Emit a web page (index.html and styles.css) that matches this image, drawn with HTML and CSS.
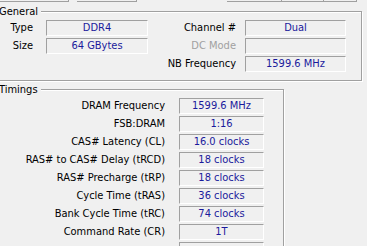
FILE: index.html
```html
<!DOCTYPE html>
<html>
<head>
<meta charset="utf-8">
<link rel="stylesheet" href="styles.css">
</head>
<body>
<div class="panel">
  <div class="topstrip">
    <span class="cell c1"></span><span class="cell c2"></span><span class="gap1"></span><span class="cell c3"></span><span class="cell c4"></span><span class="cell c5"></span>
  </div>

  <div class="group general">
    <div class="title">General</div>
    <div class="grid-gen">
      <div class="lbl l1">Type</div>
      <div class="field f1">DDR4</div>
      <div class="lbl l2">Channel #</div>
      <div class="field f2">Dual</div>

      <div class="lbl l1">Size</div>
      <div class="field f1">64 GBytes</div>
      <div class="lbl l2 disabled">DC Mode</div>
      <div class="field f2"></div>

      <div class="lbl l1"></div>
      <div class="empty"></div>
      <div class="lbl l2">NB Frequency</div>
      <div class="field f2">1599.6 MHz</div>
    </div>
  </div>

  <div class="group timings">
    <div class="title">Timings</div>
    <div class="grid-tim">
      <div class="lbl lt">DRAM Frequency</div><div class="field ft">1599.6 MHz</div>
      <div class="lbl lt">FSB:DRAM</div><div class="field ft">1:16</div>
      <div class="lbl lt">CAS# Latency (CL)</div><div class="field ft">16.0 clocks</div>
      <div class="lbl lt">RAS# to CAS# Delay (tRCD)</div><div class="field ft">18 clocks</div>
      <div class="lbl lt">RAS# Precharge (tRP)</div><div class="field ft">18 clocks</div>
      <div class="lbl lt">Cycle Time (tRAS)</div><div class="field ft">36 clocks</div>
      <div class="lbl lt">Bank Cycle Time (tRC)</div><div class="field ft">74 clocks</div>
      <div class="lbl lt">Command Rate (CR)</div><div class="field ft">1T</div>
      <div class="lbl lt"></div><div class="field ft"></div>
    </div>
  </div>
</div>
</body>
</html>
```

FILE: styles.css
```css
html, body {
  margin: 0;
  padding: 0;
  background: #f0f0f0;
  overflow: hidden;
}
body {
  width: 367px;
  height: 246px;
  font-family: "DejaVu Sans Condensed", "DejaVu Sans", "Liberation Sans", sans-serif;
  font-size: 11px;
  color: #000;
}
.panel {
  margin-left: -6px;
  width: 373px;
}
.topstrip {
  display: flex;
  height: 2px;
  padding-left: 6px;
}
.cell {
  height: 1px;
  border-bottom: 1px solid #a0a0a0;
  border-right: 1px solid #a0a0a0;
}
.c1 { width: 68px; }
.c2 { width: 59px; margin-left: 8px; }
.gap1 { width: 90px; }
.c3 { width: 54px; }
.c4 { width: 41px; }
.c5 { width: 32px; }

.group {
  border: 1px solid #a0a0a0;
  box-shadow: inset 1px 1px 0 #fff, 1px 1px 0 #fff;
  box-sizing: border-box;
}
.general {
  margin-top: 9px;
  width: 368px;
  padding: 0 15px 8px 0;
}
.timings {
  margin-top: 8px;
  width: 290px;
  padding: 0 19px 8px 0;
}
.title {
  width: fit-content;
  margin-top: -7px;
  margin-left: 4px;
  padding-right: 3px;
  height: 13px;
  line-height: 13px;
  background: #f0f0f0;
  position: relative;
}
.grid-gen {
  display: grid;
  grid-template-columns: 51px 102px 97px 101px;
  grid-auto-rows: 16px;
  row-gap: 2px;
  margin-top: 2px;
}
.grid-tim {
  display: grid;
  grid-template-columns: 184px 85px;
  grid-auto-rows: 16px;
  row-gap: 2px;
  margin-top: 2px;
}
.lbl {
  text-align: right;
  line-height: 16px;
  white-space: nowrap;
}
.l1 { padding-right: 13px; }
.l2 { padding-right: 9px; }
.lt { padding-right: 14px; }
.disabled { color: #a0a0a0; }
.field {
  box-sizing: border-box;
  height: 16px;
  border-top: 1px solid #a0a0a0;
  border-left: 1px solid #a0a0a0;
  border-bottom: 1px solid #fff;
  border-right: 1px solid #fff;
  text-align: center;
  line-height: 14px;
  color: #1a1a9c;
  white-space: nowrap;
}
```
